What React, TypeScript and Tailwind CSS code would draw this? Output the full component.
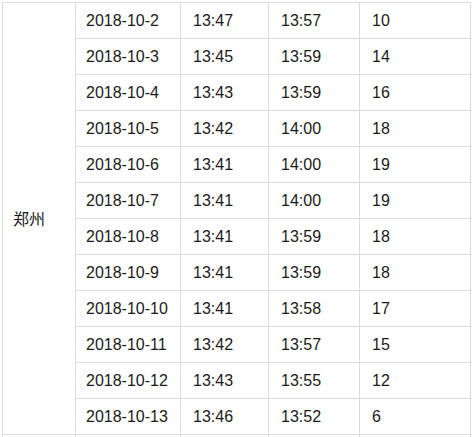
const ROWS = [
  ["2018-10-2", "13:47", "13:57", "10"],
  ["2018-10-3", "13:45", "13:59", "14"],
  ["2018-10-4", "13:43", "13:59", "16"],
  ["2018-10-5", "13:42", "14:00", "18"],
  ["2018-10-6", "13:41", "14:00", "19"],
  ["2018-10-7", "13:41", "14:00", "19"],
  ["2018-10-8", "13:41", "13:59", "18"],
  ["2018-10-9", "13:41", "13:59", "18"],
  ["2018-10-10", "13:41", "13:58", "17"],
  ["2018-10-11", "13:42", "13:57", "15"],
  ["2018-10-12", "13:43", "13:55", "12"],
  ["2018-10-13", "13:46", "13:52", "6"],
];

export default function App() {
  return (
    <div className="w-[475px] h-[437px] overflow-hidden bg-white pt-[2px] pl-[2px]">
      <table
        className="table-fixed border-collapse text-[16px] text-[#1a1a1a]"
        style={{ fontFamily: '"Liberation Sans", Arial, "Noto Sans CJK SC", sans-serif' }}
      >
        <colgroup>
          <col className="w-[73px]" />
          <col className="w-[105px]" />
          <col className="w-[88px]" />
          <col className="w-[91px]" />
          <col className="w-[111px]" />
        </colgroup>
        <tbody>
          {ROWS.map((r, i) => (
            <tr key={i} className="h-[36px]">
              {i === 0 && (
                <td rowSpan={ROWS.length} className="border border-[#dcdcdc] pl-[10px] align-middle">
                  <span style={{ fontFamily: '"Noto Sans CJK SC", sans-serif' }} className="text-[16px]">郑州</span>
                </td>
              )}
              {r.map((c, j) => (
                <td key={j} className={`border border-[#dcdcdc] p-0 ${j === 0 ? "pl-[10px]" : "pl-[12px]"}`}>
                  {c}
                </td>
              ))}
            </tr>
          ))}
          <tr className="h-[36px]">
            <td className="border border-[#dcdcdc]" />
            <td className="border border-[#dcdcdc]" />
            <td className="border border-[#dcdcdc]" />
            <td className="border border-[#dcdcdc]" />
            <td className="border border-[#dcdcdc]" />
          </tr>
        </tbody>
      </table>
    </div>
  );
}
